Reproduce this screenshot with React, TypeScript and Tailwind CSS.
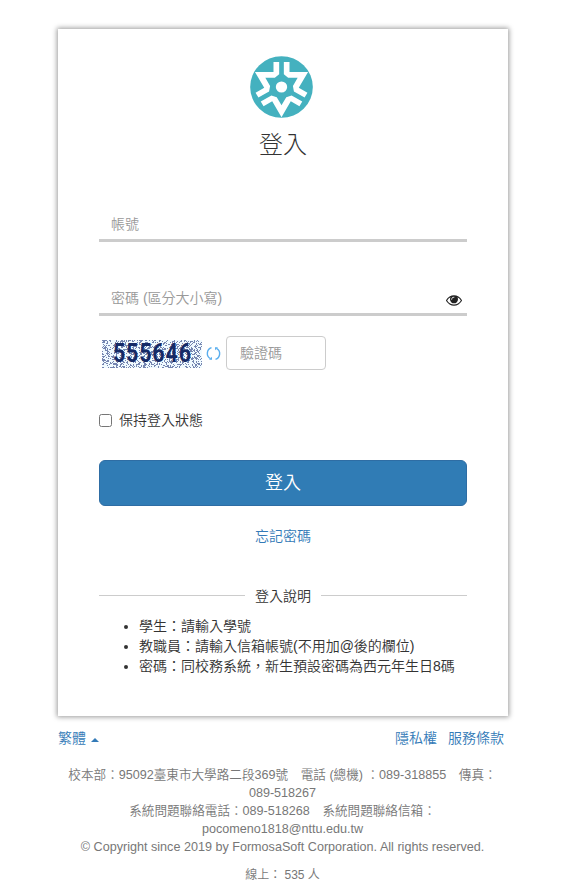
// One bent arm of the emblem, repeated every 120 degrees
const ARM =
  "M-24 -76H-7V-39L-20 -28H-48.500L-34.200 -3.300L-37.300 13.400L-69.300 31.900L-77.800 17.200L-51.800 2.200L-79.700 -46H-24Z";

function Logo() {
  return (
    <svg className="h-[62px] w-[63px]" viewBox="-94.5 -94.5 189 189" preserveAspectRatio="none">
      <circle r="94" fill="#44b1bf" />
      {[0, 120, 240].map((angle) => (
        <path key={angle} d={ARM} transform={`rotate(${angle})`} fill="#fff" />
      ))}
      <circle r="17" fill="#fff" />
    </svg>
  );
}

function EyeIcon() {
  return (
    <svg className="h-[11px] w-4" viewBox="0 384 1792 1152" fill="#222">
      <path d="M1664 960q-152 -236 -381 -353q61 104 61 225q0 185 -131.500 316.500t-316.500 131.500t-316.500 -131.500t-131.500 -316.500q0 -121 61 -225q-229 117 -381 353q133 205 333.500 326.500t434.500 121.500t434.500 -121.500t333.500 -326.500zM944 576q0 -20 -14 -34t-34 -14q-125 0 -214.500 89.500t-89.500 214.500q0 20 14 34t34 14t34 -14t14 -34q0 -86 61 -147t147 -61q20 0 34 -14t14 -34zM1792 960q0 34 -20 69q-140 230 -376.500 368.500t-499.500 138.500t-499.500 -139t-376.500 -368q-20 -35 -20 -69t20 -69q140 -229 376.500 -368t499.500 -139t499.500 139t376.500 368q20 35 20 69z" />
    </svg>
  );
}

function Captcha() {
  let seed = 77;
  const rand = () => {
    seed = (seed * 16807) % 2147483647;
    return seed / 2147483647;
  };
  let noise = "";
  for (let y = 0; y < 28; y++) {
    for (let x = 0; x < 100; x++) {
      if (rand() < 0.36) noise += `M${x} ${y}h1v1h-1z`;
    }
  }
  return (
    <svg className="mt-px h-7 w-[100px] overflow-visible" viewBox="0 0 100 28">
      <rect width="100" height="28" fill="#f0faff" />
      <path d={noise} fill="#7585b0" shapeRendering="crispEdges" />
      <text
        transform="translate(11 22) scale(0.83 1)"
        textLength="94"
        lengthAdjust="spacing"
        fontSize="26"
        fontWeight="700"
        fill="#152a66"
        fontFamily="Roboto"
      >
        555646
      </text>
    </svg>
  );
}

export default function App() {
  return (
    <div className="h-[894px] w-[567px] overflow-hidden bg-white pl-[58px] pt-[29px] font-['Liberation_Sans','Noto_Sans_CJK_TC',sans-serif] text-sm leading-5 font-[350] text-[#333]">
      <main className="flex h-[687px] w-[450px] flex-col bg-white px-[41px] shadow-[0_0_5px_1px_rgba(0,0,0,0.4)]">
        <div className="mt-[27px] flex justify-center pr-[3px]">
          <Logo />
        </div>
        <h1 className="mt-[11px] text-center text-2xl font-light leading-[32px]">登入</h1>

        <input
          className="mt-[48px] h-[33px] border-b-3 border-[#ccc] px-3 outline-none placeholder:text-[#999]"
          placeholder="帳號"
        />
        <div className="mt-[41px] flex h-[33px] items-center border-b-3 border-[#ccc] px-3 pr-[5px]">
          <input className="flex-1 outline-none placeholder:text-[#999]" placeholder="密碼 (區分大小寫)" />
          <span className="mt-1">
            <EyeIcon />
          </span>
        </div>

        <div className="mt-5 flex h-[34px] items-center pl-[3px]">
          <Captcha />
          <svg className="ml-1 mt-px h-[15px] w-[15px]" viewBox="0 0 15 15" fill="none" stroke="#5aaeee" strokeWidth="1.4">
            <path d="M5.500 1.700A6 6 0 0 0 4.500 12.700M9.500 13.300A6 6 0 0 0 10.500 2.300" />
            <path d="M3 13.700h3v-3zM12 1.300h-3v3z" fill="#5aaeee" stroke="none" />
          </svg>
          <input
            className="ml-[5px] h-[34px] w-[100px] rounded border border-[#ccc] px-[13px] outline-none placeholder:text-[#999]"
            placeholder="驗證碼"
          />
        </div>

        <label className="mt-10 flex items-center gap-[7px]">
          <input type="checkbox" className="h-[13px] w-[13px]" />
          保持登入狀態
        </label>

        <button className="mt-[30px] h-[46px] rounded-md border border-[#2e6da4] bg-[#307cb5] text-lg text-white">
          登入
        </button>
        <a className="mt-5 text-center text-[#337ab7]">忘記密碼</a>

        <div className="mt-10 flex items-center gap-[10px]">
          <span className="mb-0.5 h-px flex-1 bg-[#ccc]" />
          登入說明
          <span className="mb-0.5 h-px flex-1 bg-[#ccc]" />
        </div>
        <ul className="mt-[10px] list-disc whitespace-nowrap pl-10">
          <li>學生：請輸入學號</li>
          <li>教職員：請輸入信箱帳號(不用加@後的欄位)</li>
          <li>密碼：同校務系統，新生預設密碼為西元年生日8碼</li>
        </ul>
      </main>

      <div className="mt-[12px] flex w-[446px] text-[#337ab7]">
        <span>繁體</span>
        <span className="ml-[5px] mt-[10px] h-0 w-0 border-x-4 border-b-4 border-x-transparent border-b-[#337ab7]" />
        <span className="ml-auto">隱私權</span>
        <span className="ml-[11px]">服務條款</span>
      </div>

      <footer className="mt-[18px] w-[449px] whitespace-nowrap text-center text-[12.6px] leading-[18px] text-[#777]">
        <p>校本部：95092臺東市大學路二段369號　電話 (總機) ：089-318855　傳真：</p>
        <p>089-518267</p>
        <p>系統問題聯絡電話：089-518268　系統問題聯絡信箱：</p>
        <p>pocomeno1818@nttu.edu.tw</p>
        <p>© Copyright since 2019 by FormosaSoft Corporation. All rights reserved.</p>
        <p className="mt-[10px] text-xs leading-[18px]">線上： 535 人</p>
      </footer>
    </div>
  );
}
